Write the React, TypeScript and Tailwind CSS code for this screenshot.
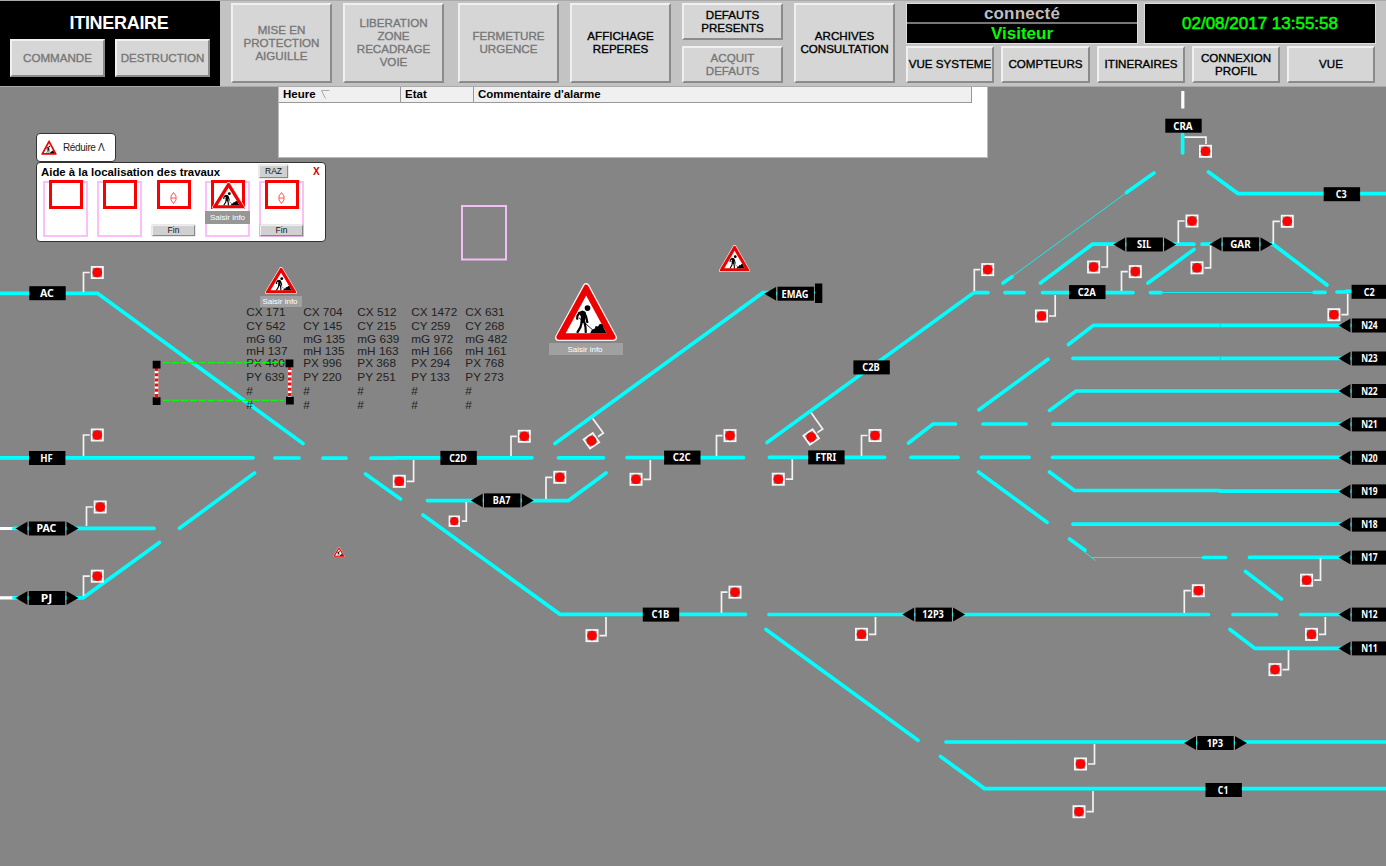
import React from "react";

type Arrow = "none" | "left" | "both";

const TRACKS: string[] = [
  "M-4 293.3H97.5L303 443.5",
  "M-4 457.8H253",
  "M275 458H299",
  "M323 458.2H346",
  "M371 458.2H395M394 457.8H532",
  "M558.5 457.8H603.5",
  "M627 457.6H743.5",
  "M769.5 457.3H884.5",
  "M911 457.3H958",
  "M981.5 457.3H1029",
  "M1052.5 457.3H1350",
  "M365.5 474L400.5 499",
  "M423 515L560 614.3H745.5",
  "M427.5 500.6H568.5L606 473",
  "M555 443.5L763 292.6H770",
  "M767 442.5L974 292.6H988",
  "M1005 292.6H1024",
  "M1042.5 292.6H1133",
  "M1150.5 292.6H1161",
  "M1314 292.3H1325",
  "M1337 292H1348M1346 291.4H1386",
  "M1003 283L1012 276.7",
  "M1126.5 192.6L1154 173",
  "M1208.5 172L1238 193.6H1390",
  "M1040.5 283L1092.5 244.2H1194",
  "M1202 244.2H1273L1327 285",
  "M1148 283L1194 249.5",
  "M1068.5 344.5L1093.5 325.3H1350",
  "M1073 358.3H1350",
  "M979 409.8L1048 359.3",
  "M1049.5 410.5L1076 391H1350",
  "M908.5 443L933 424H955.5",
  "M983 424H1026",
  "M1053 424.2H1350",
  "M1049.5 472L1074.5 490.5H1220M1220 491.2H1350",
  "M1073 524.2H1350",
  "M978.5 472L1047 522.3",
  "M1069.5 539L1085 550.3",
  "M1203.5 557.5H1225.5",
  "M1249.5 557.4H1350",
  "M1245.5 571.5L1281.5 599",
  "M769 614.5H1208.5",
  "M1233 614.5H1276.5",
  "M1301 614.5H1350",
  "M1230 629.5L1255 648.4H1350",
  "M766 629.5L918 740.3",
  "M946 742H1390",
  "M940.5 756.5L984.5 788.6H1390",
  "M14 528.4H154",
  "M179.5 528.3L254.5 473",
  "M14 597.8H83L159.5 542.5",
  "M1182.6 134V153",
];

const SIGNALS: [number, number, number, number][] = [
  [97.3, 272.5, 83.5, 292],
  [97.3, 435, 83.5, 456],
  [100.2, 507, 86.5, 526],
  [97.3, 576.2, 83.5, 596],
  [524.3, 436.3, 511, 456],
  [399.3, 481.3, 413.6, 460],
  [559.8, 477.3, 546, 499],
  [730, 435.6, 716.5, 456],
  [636, 479.3, 650.3, 460],
  [875, 435.5, 861.5, 456],
  [778.3, 479.2, 792.3, 459],
  [987.7, 269.6, 974.3, 291],
  [1041.5, 316, 1055.2, 295],
  [1135.3, 271.6, 1121.5, 291],
  [1093.6, 267, 1107.3, 246],
  [1192, 221, 1178.3, 243],
  [1197, 267.8, 1210.6, 246],
  [1287.3, 221.3, 1273.3, 244],
  [1333.9, 314.7, 1347.7, 294],
  [592, 635.6, 606, 617],
  [735, 592.2, 721.5, 613],
  [861.5, 634.3, 875.5, 617],
  [1198.3, 590.7, 1184.3, 613],
  [1306.6, 580.2, 1320.5, 558],
  [1311.5, 634.4, 1325.3, 617],
  [1275, 669.6, 1288.5, 650],
  [1080.5, 764, 1094.5, 744],
  [1079, 811.7, 1093, 791],
];

const LABELS: [string, number, number, number, Arrow][] = [
  ["AC", 47.5, 293.2, 14, "none"],
  ["HF", 47.2, 458, 12.5, "none"],
  ["PAC", 47, 528.5, 20, "both"],
  ["PJ", 47, 598, 11.5, "both"],
  ["C2D", 458.6, 457.9, 17.5, "none"],
  ["BA7", 502.2, 500.4, 17.5, "both"],
  ["C2C", 682.3, 457.6, 18, "none"],
  ["FTRI", 826.4, 457.4, 20.5, "none"],
  ["C2B", 871.6, 367.4, 17.5, "none"],
  ["C1B", 661, 614.6, 18, "none"],
  ["12P3", 933.7, 614.6, 21.5, "both"],
  ["1P3", 1215.5, 743, 16.5, "both"],
  ["C1", 1223.7, 790, 10.5, "none"],
  ["C2A", 1087.3, 292.1, 18, "none"],
  ["SIL", 1144.7, 244.5, 14, "both"],
  ["GAR", 1241, 244.3, 20.5, "both"],
  ["CRA", 1183.5, 125.7, 19.5, "none"],
  ["C3", 1341.9, 194.2, 11, "none"],
  ["C2", 1369.8, 291.8, 11, "none"],
  ["EMAG", 795.7, 293.7, 27, "left"],
  ["N24", 1370, 325.5, 16.5, "left"],
  ["N23", 1370, 358.5, 16.5, "left"],
  ["N22", 1370, 391, 16.5, "left"],
  ["N21", 1370, 424.4, 16.5, "left"],
  ["N20", 1370, 457.8, 16.5, "left"],
  ["N19", 1370, 491.4, 16.5, "left"],
  ["N18", 1370, 524.6, 16.5, "left"],
  ["N17", 1370, 557.6, 16.5, "left"],
  ["N12", 1370, 614.6, 16.5, "left"],
  ["N11", 1370, 648.4, 16.5, "left"],
];

const READOUT_Y = [316, 329.6, 343.4, 355, 366.6, 380.5, 395.4, 409];
const READOUTS: [number, string[]][] = [
  [246.2, ["CX 171", "CY 542", "mG 60", "mH 137", "PX 460", "PY 639", "#", "#"]],
  [303.2, ["CX 704", "CY 145", "mG 135", "mH 135", "PX 996", "PY 220", "#", "#"]],
  [357.3, ["CX 512", "CY 215", "mG 639", "mH 163", "PX 368", "PY 251", "#", "#"]],
  [411.3, ["CX 1472", "CY 259", "mG 972", "mH 166", "PX 294", "PY 133", "#", "#"]],
  [465.3, ["CX 631", "CY 268", "mG 482", "mH 161", "PX 768", "PY 273", "#", "#"]],
];

function Lamp({ x, y, angle = 0, size = 11.2 }: { x: number; y: number; angle?: number; size?: number }) {
  return (
    <g transform={`translate(${x} ${y}) rotate(${angle})`}>
      <rect x={-size / 2} y={-size / 2} width={size} height={size} fill="#858585" stroke="#f6f6f6" strokeWidth="1.8" />
      <circle r={size * 0.43} fill="#f00" />
    </g>
  );
}

function Signal({ x, y, pole, rail, size }: { x: number; y: number; pole: number; rail: number; size?: number }) {
  const edge = pole < x ? x - 7.5 : x + 7.5;
  return (
    <>
      <path d={`M${pole} ${rail}V${y}H${edge}`} fill="none" stroke="#f2f2f2" strokeWidth="1.7" />
      <Lamp x={x} y={y} size={size} />
    </>
  );
}

function Label({ text, x, y, w, arrow }: { text: string; x: number; y: number; w: number; arrow: Arrow }) {
  return (
    <g transform={`translate(${x} ${y})`}>
      {arrow !== "none" && (
        <>
          <path d="M-31.5 0L-19.3 -7V7Z" />
          <path d="M-18.9 -7V7" stroke="#aaa" strokeWidth=".7" />
          <path d="M-18.9 -1.8V1.8" stroke="#0ff" strokeWidth="1" />
        </>
      )}
      {arrow === "both" && (
        <>
          <path d="M31.5 0L19.3 -7V7Z" />
          <path d="M18.9 -7V7" stroke="#aaa" strokeWidth=".7" />
          <path d="M18.9 -1.8V1.8" stroke="#0ff" strokeWidth="1" />
        </>
      )}
      <rect x="-18.2" y="-7" width="36.4" height="14" />
      <text
        x="-.6"
        y="3.8"
        textAnchor="middle"
        textLength={w}
        lengthAdjust="spacingAndGlyphs"
        className="fill-white font-['Noto_Sans','Open_Sans',sans-serif] text-[10.5px] font-bold"
      >
        {text}
      </text>
    </g>
  );
}

function WorksSign({ className }: { className: string }) {
  return (
    <svg viewBox="0 0 185 171" preserveAspectRatio="none" className={className}>
      <path d="M93 10L175 161H10Z" fill="#f4f4f4" stroke="#f4f4f4" strokeWidth="20" strokeLinejoin="round" />
      <path d="M93 12L174 160H11Z" fill="#ec0000" stroke="#ec0000" strokeWidth="14" strokeLinejoin="round" />
      <path d="M93 37L154 148H32Z" fill="#fff" />
      <circle cx="97" cy="74" r="8.5" />
      <path d="M69 86L82 81L91 85L92 98L88 117L76 119L77 98Z" />
      <path
        d="M74 87L67 96L66 108M88 88L93 100L97 118M81 112L76 130L66 147M87 113L91 130L92 147"
        fill="none"
        stroke="#000"
        strokeWidth="6.5"
        strokeLinejoin="round"
      />
      <path d="M72 103L112 138" stroke="#000" strokeWidth="2.5" />
      <path d="M105 148L110 138L119 134L121 127L128 128L134 120L142 122L146 134L154 148Z" />
    </svg>
  );
}

function Button({ lines, className, disabled = false }: { lines: string[]; className: string; disabled?: boolean }) {
  return (
    <button
      className={`flex shrink-0 flex-col items-center justify-center border-2 border-t-[#f0f0f0] border-l-[#f0f0f0] border-r-[#8b8b8b] border-b-[#8b8b8b] bg-[#d6d6d6] pb-[2px] text-[11.6px] leading-[13px] whitespace-nowrap ${
        disabled ? "text-[#777] [-webkit-text-stroke:0.35px_#777]" : "text-black [-webkit-text-stroke:0.35px_#000]"
      } ${className}`}
    >
      {lines.map((l) => (
        <span key={l}>{l}</span>
      ))}
    </button>
  );
}

function Toolbar() {
  return (
    <header className="flex h-[87px] border-t border-b border-t-[#aaa] border-b-[#aaa] bg-[#c3c3c3]">
      <div className="flex w-[220px] shrink-0 flex-col items-center bg-black pt-[10px]">
        <h1 className="h-[28px] pl-[18px] text-[18px] leading-[24px] font-bold text-white">
          <span className="tracking-[-0.3px]">ITINERAIRE</span>
        </h1>
        <div className="flex w-full gap-[10px] pl-[10px]">
          <Button disabled lines={["COMMANDE"]} className="h-[38px] w-[95px]" />
          <Button disabled lines={["DESTRUCTION"]} className="h-[38px] w-[95px]" />
        </div>
      </div>
      <div className="flex pt-[2px] pl-[11px]">
        <Button disabled lines={["MISE EN", "PROTECTION", "AIGUILLE"]} className="mr-[11px] h-[80px] w-[101px]" />
        <Button disabled lines={["LIBERATION", "ZONE", "RECADRAGE", "VOIE"]} className="mr-[14px] h-[80px] w-[101px]" />
        <Button disabled lines={["FERMETURE", "URGENCE"]} className="mr-[11px] h-[80px] w-[101px]" />
        <Button lines={["AFFICHAGE", "REPERES"]} className="mr-[11px] h-[80px] w-[101px]" />
        <div className="mr-[11px] flex flex-col gap-[6px]">
          <Button lines={["DEFAUTS", "PRESENTS"]} className="h-[37px] w-[101px]" />
          <Button disabled lines={["ACQUIT", "DEFAUTS"]} className="h-[37px] w-[101px]" />
        </div>
        <Button lines={["ARCHIVES", "CONSULTATION"]} className="mr-[11px] h-[80px] w-[101px]" />
        <div className="flex flex-col">
          <div className="mb-[2px] flex gap-[6px]">
            <div className="h-[41px] w-[232px] border border-[#ddd] bg-black text-center">
              <div className="h-[18px] text-[17px] leading-[19px] font-bold tracking-[0.2px] text-[#bdbdbd]">connecté</div>
              <div className="h-[21px] border-t-2 border-[#777] text-[17px] leading-[20px] font-bold text-[#0f0]">Visiteur</div>
            </div>
            <div className="flex h-[41px] w-[232px] items-center justify-center border border-[#ddd] bg-black text-[17px] text-[#0f0] [-webkit-text-stroke:0.5px_#0f0]">
              <span>02/08/2017 13:55:58</span>
            </div>
          </div>
          <div className="flex justify-between pr-[1px]">
            <Button lines={["VUE SYSTEME"]} className="h-[37px] w-[88px]" />
            <Button lines={["COMPTEURS"]} className="h-[37px] w-[89px]" />
            <Button lines={["ITINERAIRES"]} className="h-[37px] w-[88px]" />
            <Button lines={["CONNEXION", "PROFIL"]} className="h-[37px] w-[88px]" />
            <Button lines={["VUE"]} className="h-[37px] w-[88px]" />
          </div>
        </div>
      </div>
    </header>
  );
}

function AlarmList() {
  return (
    <section className="absolute top-0 left-[278px] h-[71px] w-[710px] border border-t-0 border-[#bbb] bg-white">
      <div className="flex h-[16px] text-[11.5px] leading-[15px] font-bold text-black">
        <div className="flex w-[122px] items-center gap-[5px] border-r border-b border-[#999] bg-[#f0f0f0] pl-[4px]">
          Heure
          <svg className="h-[9px] w-[9px]" viewBox="0 0 9 9">
            <path d="M8.5 .5H.5L4.5 8.5" fill="none" stroke="#aaa" />
          </svg>
        </div>
        <div className="w-[73px] border-r border-b border-[#999] bg-[#f0f0f0] pl-[4px]">Etat</div>
        <div className="w-[498px] border-r border-b border-[#999] bg-[#f0f0f0] pl-[4px] tracking-[-0.05px]">Commentaire d'alarme</div>
      </div>
    </section>
  );
}

function SmallButton({ text, className }: { text: string; className: string }) {
  return (
    <button
      className={`flex items-center justify-center border border-t-[#eee] border-l-[#eee] border-r-[#888] border-b-[#888] bg-[#d0d0d0] text-[8.5px] leading-none text-[#111] shadow-[0_0_1px_#777] ${className}`}
    >
      {text}
    </button>
  );
}

function Slot({ frame, children }: { frame?: boolean; children?: React.ReactNode }) {
  return (
    <div className={`relative h-[56px] w-[45px] border-2 ${frame ? "border-[#fcbffc]" : "border-transparent"}`}>
      <div className="-mt-[3px] ml-[4px] h-[29px] w-[34px] border-[3px] border-[#fa0000] bg-white" />
      {children}
    </div>
  );
}

function Marker() {
  return (
    <svg className="absolute top-[9px] left-[17px] h-[12px] w-[7px]" viewBox="0 0 7 12">
      <path d="M3.5 .5L6 4V8L3.5 11.5L1 8V4ZM1 6H6" fill="none" stroke="#f44" strokeWidth=".9" />
    </svg>
  );
}

function WorksPanel() {
  return (
    <aside className="absolute top-[46px] left-[36px] w-[290px] text-black">
      <div className="flex h-[29px] w-[80px] items-center gap-[6px] rounded-[4px] border border-[#333] bg-white pl-[4px] text-[10px]">
        <WorksSign className="h-[15px] w-[16px]" />
        <span className="tracking-[-0.35px] text-[#222]">Réduire Λ</span>
      </div>
      <div className="flex h-[80px] w-[290px] flex-col rounded-[4px] border border-[#333] bg-white">
        <div className="flex h-[17px] items-center pl-[4px]">
          <span className="w-[218px] text-[11.4px] leading-[14px] font-bold whitespace-nowrap">Aide à la localisation des travaux</span>
          <SmallButton text="RAZ" className="h-[13px] w-[29px]" />
          <span className="ml-[25px] text-[10px] font-bold text-[#d00000]">X</span>
        </div>
        <div className="flex gap-[9px] pt-px pl-[6px]">
          <Slot frame />
          <Slot frame />
          <Slot>
            <Marker />
            <SmallButton text="Fin" className="absolute top-[42px] -left-px h-[11px] w-[43px]" />
          </Slot>
          <Slot frame>
            <WorksSign className="absolute -top-px left-[5px] h-[27px] w-[33px]" />
            <div className="absolute top-[28px] -left-[2px] h-[13px] w-[45px] bg-[#979797] text-center text-[8px] leading-[13px] whitespace-nowrap text-white">
              Saisir info
            </div>
          </Slot>
          <Slot frame>
            <Marker />
            <SmallButton text="Fin" className="absolute top-[42px] -left-px h-[11px] w-[43px]" />
          </Slot>
        </div>
      </div>
    </aside>
  );
}

function TrackDiagram() {
  return (
    <svg className="absolute top-0 left-0 h-[779px] w-[1386px]" viewBox="0 87 1386 779">
      <g fill="none" stroke="#fff" strokeWidth="3.2">
        <path d="M0 528.5H14M0 597.8H14M1182.8 91V108.5" />
      </g>
      <g fill="none" stroke="#0ff" strokeLinecap="round" strokeWidth="3.7">
        {TRACKS.map((d) => (
          <path key={d} d={d} />
        ))}
      </g>
      <g fill="none" stroke="#1ee" strokeWidth="1">
        <path d="M1012 276.5L1126.5 192.6M1160 292.5H1314M1084 551.5L1095.5 560.5M1091 557.5H1203" />
      </g>
      <path d="M1341 357.5V358M1220.3 323.5V327M1220.3 356.5V360" stroke="#0bb" strokeWidth=".6" />
      {LABELS.map(([text, x, y, w, arrow]) => (
        <Label key={text} text={text} x={x} y={y} w={w} arrow={arrow} />
      ))}
      <path d="M814 292.5H815" stroke="#0ff" strokeWidth="2" />
      <rect x="815" y="283.5" width="7.3" height="19.5" />
      {SIGNALS.map(([x, y, pole, rail]) => (
        <Signal key={`${x}-${y}`} x={x} y={y} pole={pole} rail={rail} />
      ))}
      <Signal x={454.3} y={521.2} pole={466.3} rail={502} size={9.6} />
      <g fill="none" stroke="#f2f2f2" strokeWidth="1.7">
        <path d="M1184.5 137.2H1206V144" />
        <path d="M592.7 418.5L603.3 433L598 436.8" />
        <path d="M811 412.5L822.7 429L817.3 432.6" />
      </g>
      <Lamp x={1205.5} y={151.3} />
      <Lamp x={591.4} y={440.8} angle={-35} />
      <Lamp x={811.2} y={437} angle={-35} />
      <rect x="462" y="206" width="44" height="53.5" fill="none" stroke="#f3bdf5" strokeWidth="2" />
      <g className="fill-[#222] font-['Liberation_Sans',Arial,sans-serif] text-[11.8px]">
        {READOUTS.map(([x, rows]) =>
          rows.map((row, i) => (
            <text key={`${x}-${i}`} x={x} y={READOUT_Y[i]}>
              {row}
            </text>
          )),
        )}
      </g>
      <path d="M163 362.7H284M163 400.4H284" fill="none" stroke="#0f0" strokeWidth="1.3" strokeDasharray="7 2" />
      <path d="M156.5 368V398M289.7 367V397" stroke="#fff" strokeWidth="3.6" />
      <path d="M156.5 368V398M289.7 367V397" stroke="#e11" strokeWidth="3.6" strokeDasharray="3 2.2" />
      <path d="M152.7 360.8h7.8v7.8h-7.8zM152.7 397.2h7.8v7.8h-7.8zM285.6 359.4h7.8v7.8h-7.8zM286 396.8h7.8v7.8h-7.8z" />
    </svg>
  );
}

export default function App() {
  return (
    <div className="h-[866px] w-[1386px] overflow-hidden bg-[#858585] font-['Liberation_Sans',Arial,sans-serif]">
      <Toolbar />
      <main className="relative h-[779px] overflow-hidden">
        <TrackDiagram />
        <AlarmList />
        <WorksPanel />
        <WorksSign className="absolute top-[180px] left-[265px] h-[27px] w-[32px]" />
        <div className="absolute top-[209px] left-[260px] h-[11px] w-[42px] bg-[#a0a0a0] pr-[2px] text-center text-[8px] leading-[11px] whitespace-nowrap text-white">
          Saisir info
        </div>
        <WorksSign className="absolute top-[158px] left-[719px] h-[27px] w-[31px]" />
        <WorksSign className="absolute top-[196px] left-[555px] h-[58px] w-[62px]" />
        <div className="absolute top-[256px] left-[549px] h-[12px] w-[74px] bg-[#a0a0a0] pr-[2px] text-center text-[8px] leading-[13px] text-white">
          Saisir info
        </div>
        <WorksSign className="absolute top-[460px] left-[333px] h-[10px] w-[12px]" />
      </main>
    </div>
  );
}
